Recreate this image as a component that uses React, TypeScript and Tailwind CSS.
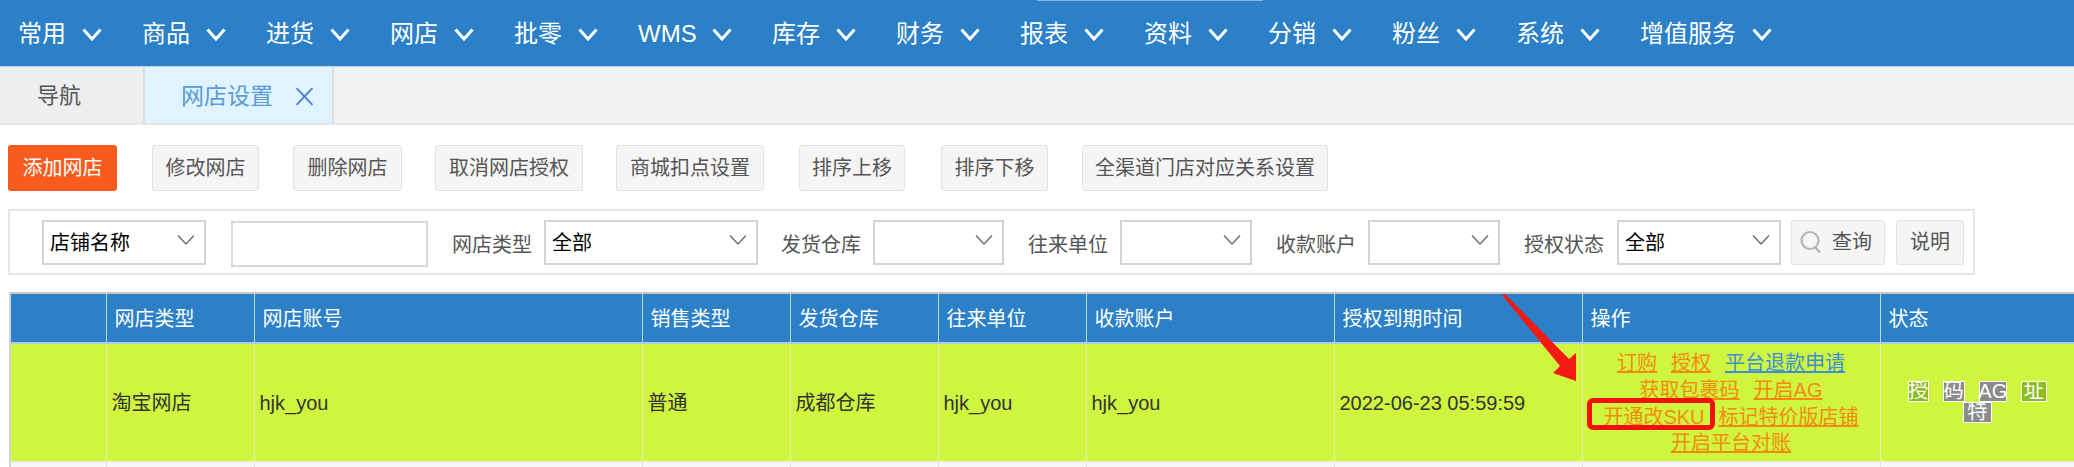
import React from 'react';

const navItems: [string, string][] = [
  ['常用', 'w-[48px]'], ['商品', 'w-[48px]'], ['进货', 'w-[48px]'], ['网店', 'w-[48px]'], ['批零', 'w-[48px]'],
  ['WMS', 'w-[58px]'], ['库存', 'w-[48px]'], ['财务', 'w-[48px]'], ['报表', 'w-[48px]'], ['资料', 'w-[48px]'],
  ['分销', 'w-[48px]'], ['粉丝', 'w-[48px]'], ['系统', 'w-[48px]'], ['增值服务', 'w-[96px]'],
];

const buttons: [string, string][] = [
  ['修改网店', 'w-[107px] ml-[35px]'],
  ['删除网店', 'w-[109px] ml-[34px]'],
  ['取消网店授权', 'w-[148px] ml-[33px]'],
  ['商城扣点设置', 'w-[148px] ml-[33px]'],
  ['排序上移', 'w-[106px] ml-[35px]'],
  ['排序下移', 'w-[107px] ml-[36px]'],
  ['全渠道门店对应关系设置', 'w-[246px] ml-[34px]'],
];

function Chevron() {
  return (
    <svg width="20" height="13" viewBox="0 0 20 13" fill="none" className="shrink-0">
      <polyline points="1.5,1.5 10,11 18.5,1.5" stroke="#ffffff" strokeWidth="3" />
    </svg>
  );
}

function Select({ text, className }: { text?: string; className: string }) {
  return (
    <div className={`h-[45px] shrink-0 border-2 border-[#d4d4d4] bg-white flex items-center justify-between pl-[6px] pr-[9px] text-[20px] text-black ${className}`}>
      <span className="mt-[2px]">{text}</span>
      <svg width="18" height="10" viewBox="0 0 18 10" fill="none" className="mb-[5px]">
        <polyline points="1,0.5 9,9 17,0.5" stroke="#666666" strokeWidth="1.3" />
      </svg>
    </div>
  );
}

function Label({ text, className }: { text: string; className: string }) {
  return <span className={`shrink-0 w-[79px] text-[20px] text-[#555] mt-[6px] whitespace-nowrap ${className}`}>{text}</span>;
}

function L({ children, blue }: { children: React.ReactNode; blue?: boolean }) {
  return <a className={`underline whitespace-nowrap ${blue ? 'text-[#3f8fd6]' : 'text-[#f58a10]'}`}>{children}</a>;
}

const heads = ['', '网店类型', '网店账号', '销售类型', '发货仓库', '往来单位', '收款账户', '授权到期时间', '操作', '状态'];
const widths = ['w-[95px]', 'w-[148px]', 'w-[388px]', 'w-[148px]', 'w-[148px]', 'w-[148px]', 'w-[248px]', 'w-[248px]', 'w-[298px]', 'w-[194px]'];
const cells = ['', '淘宝网店', 'hjk_you', '普通', '成都仓库', 'hjk_you', 'hjk_you', '2022-06-23 05:59:59'];

export default function App() {
  return (
    <div className="relative w-[2074px] h-[467px] overflow-hidden bg-white font-['Liberation_Sans','Noto_Sans_CJK_SC',sans-serif]">
      <div className="absolute left-[1037px] top-0 w-[226px] h-[1px] bg-[#86b5df]" />

      <nav className="h-[66px] bg-[#2b80c7] flex items-center pl-[18px] pt-[2px] text-white text-[24px]">
        {navItems.map(([t, w]) => (
          <div key={t} className="flex items-center pr-[40px] shrink-0">
            <span className={`${w} whitespace-nowrap`}>{t}</span>
            <span className="ml-[16px] flex"><Chevron /></span>
          </div>
        ))}
      </nav>

      <div className="h-[59px] bg-[#f1f1f1] border-t border-t-[#bcd6ec] border-b-2 border-b-[#e6e6e6] flex">
        <div className="w-[145px] bg-[#eeeeee] border-r-2 border-r-[#dddddd] flex items-center pl-[37px] text-[22px] text-[#555]">导航</div>
        <div className="w-[189px] bg-[#dff4fe] border-r-2 border-r-[#dddddd] flex items-center pl-[36px] pt-[2px] text-[23px] text-[#5b9bd5] whitespace-nowrap">
          网店设置
          <svg width="19" height="19" viewBox="0 0 18 18" fill="none" className="ml-[22px]">
            <path d="M1.5 1 L16.5 17 M16.5 1 L1.5 17" stroke="#4f7ddb" strokeWidth="1.8" />
          </svg>
        </div>
      </div>

      <div className="flex pl-[8px] mt-[20px]">
        <div className="w-[109px] h-[46px] rounded-[3px] bg-[#f75c1e] text-white text-[20px] flex items-center justify-center">添加网店</div>
        {buttons.map(([t, c]) => (
          <div key={t} className={`h-[46px] rounded-[3px] bg-[#f5f5f5] border border-[#e2e2e2] text-[#555] text-[20px] flex items-center justify-center whitespace-nowrap ${c}`}>{t}</div>
        ))}
      </div>

      <div className="ml-[8px] mt-[18px] w-[1967px] h-[66px] border-2 border-[#e6e6e6] flex items-center pl-[32px]">
        <Select text="店铺名称" className="w-[164px]" />
        <div className="ml-[25px] mt-[4px] w-[197px] h-[46px] shrink-0 border-2 border-[#d8d8d8]" />
        <Label text="网店类型" className="ml-[24px]" />
        <Select text="全部" className="ml-[13px] w-[214px]" />
        <Label text="发货仓库" className="ml-[23px]" />
        <Select className="ml-[13px] w-[131px]" />
        <Label text="往来单位" className="ml-[24px]" />
        <Select className="ml-[13px] w-[132px]" />
        <Label text="收款账户" className="ml-[24px]" />
        <Select className="ml-[13px] w-[132px]" />
        <Label text="授权状态" className="ml-[24px]" />
        <Select text="全部" className="ml-[14px] w-[164px]" />
        <div className="ml-[10px] w-[94px] h-[45px] shrink-0 rounded-[3px] bg-[#f5f5f5] border border-[#e2e2e2] flex items-center pl-[8px] text-[20px] text-[#555]">
          <svg width="22" height="24" viewBox="0 0 22 24" fill="none">
            <circle cx="10" cy="10.5" r="8.5" stroke="#b5b5b5" strokeWidth="2.2" />
            <path d="M15 17 L20 22.5" stroke="#b5b5b5" strokeWidth="2.6" />
          </svg>
          <span className="ml-[10px] whitespace-nowrap">查询</span>
        </div>
        <div className="ml-[11px] w-[68px] h-[45px] shrink-0 rounded-[3px] bg-[#f5f5f5] border border-[#e2e2e2] flex items-center justify-center text-[20px] text-[#555]">说明</div>
      </div>

      <div className="ml-[9px] mt-[17px] w-[2065px] border-t-2 border-l-2 border-t-[#c8c8c8] border-l-[#d4d4d4]">
        <table className="table-fixed border-collapse w-[2063px]">
          <thead>
            <tr className="h-[49px] bg-[#2b80c7] border-b-2 border-b-[#a9cde9]">
              {heads.map((h, i) => (
                <th key={i} className={`${widths[i]} border-r border-r-[#bcd8ee] text-left font-normal text-[20px] text-white pl-[8px] pt-[2px] whitespace-nowrap`}>{h}</th>
              ))}
            </tr>
          </thead>
          <tbody>
            <tr className="h-[119px] bg-[#cff53e] text-[20px] text-[#333]">
              {cells.map((c, i) => (
                <td key={i} className="border-r border-r-[#e4eeb0] pl-[5px] whitespace-nowrap">{c}</td>
              ))}
              <td className="border-r border-r-[#e4eeb0] text-[20px] leading-[26.7px] pt-[2px]">
                <div className="flex justify-center gap-x-[14px]"><L>订购</L><L>授权</L><L blue>平台退款申请</L></div>
                <div className="flex justify-center gap-x-[14px]"><L>获取包裹码</L><L>开启AG</L></div>
                <div className="flex justify-center gap-x-[14px]"><L>开通改SKU</L><L>标记特价版店铺</L></div>
                <div className="flex justify-center gap-x-[14px]"><L>开启平台对账</L></div>
              </td>
              <td className="align-middle">
                <div className="mx-auto w-[150px] flex flex-wrap justify-center gap-x-[14px] text-white text-[20px] leading-[19px] mb-[1px]">
                  <span className="w-[21px] h-[21px] border border-white bg-[#8cbc22] flex items-center justify-center">授</span>
                  <span className="w-[22px] h-[21px] border border-white bg-[#8b8b8b] flex items-center justify-center">码</span>
                  <span className="w-[28px] h-[21px] border border-white bg-[#8b8b8b] flex items-center justify-center">AG</span>
                  <span className="w-[26px] h-[21px] border border-white bg-[#8cbc22] flex items-center justify-center">址</span>
                  <span className="w-[29px] h-[21px] border border-white bg-[#8b8b8b] flex items-center justify-center">特</span>
                </div>
              </td>
            </tr>
            <tr className="h-[6px] bg-[#f7f7f7] border-t-2 border-t-[#eeeeee]">
              {heads.map((_, i) => (
                <td key={i} className="border-r border-r-[#e2e2e2] p-0" />
              ))}
            </tr>
          </tbody>
        </table>
      </div>

      <div className="absolute left-[1587px] top-[398px] w-[128px] h-[32px] border-[5px] border-[#f50f0f] rounded-[6px]" />
      <svg className="absolute left-[1490px] top-[285px]" width="100" height="105" viewBox="0 0 100 105" fill="none">
        <polygon points="12,10 15,9 79,74 86,68 86,96 63,88 70,81" fill="#f41a14" />
      </svg>
    </div>
  );
}
